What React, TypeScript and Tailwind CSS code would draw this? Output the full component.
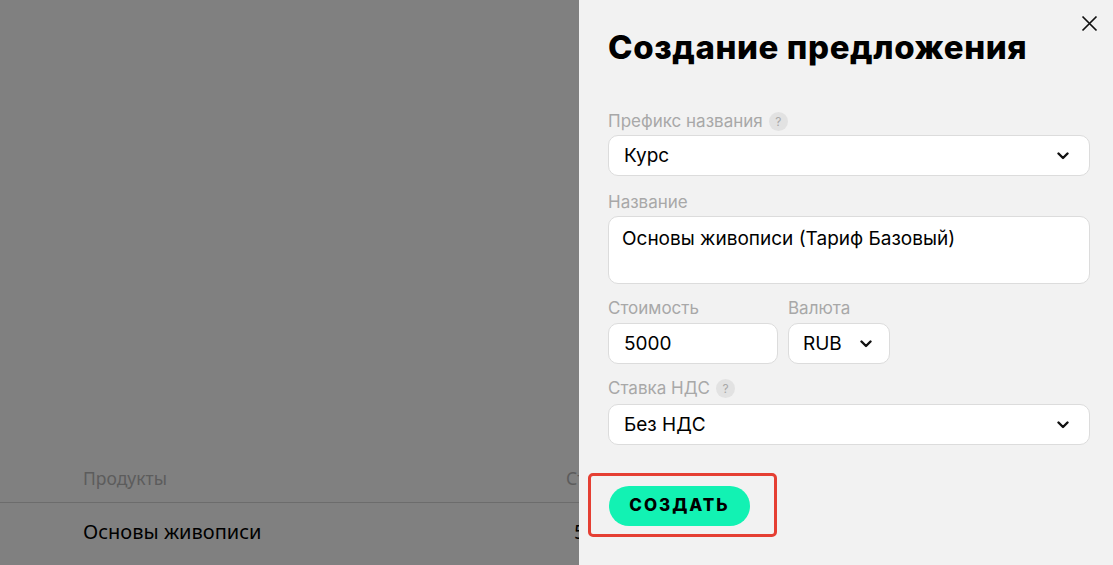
import React from "react";

const Chevron = ({ className = "" }: { className?: string }) => (
  <svg className={className} width="12" height="8" viewBox="0 0 12 8" fill="none">
    <path d="M1.5 1.5L6 6L10.5 1.5" stroke="#111" strokeWidth="2.4" strokeLinecap="round" strokeLinejoin="round" />
  </svg>
);

const Help = () => (
  <span className="ml-[6px] inline-flex h-[19px] w-[19px] items-center justify-center rounded-full bg-[#e2e2e2] text-[12px] leading-none text-[#a8a8a8]">?</span>
);

export default function App() {
  const font = { fontFamily: "Inter, 'Noto Sans', sans-serif" };
  return (
    <div className="flex h-[565px] w-[1113px] overflow-hidden">
      <div className="relative flex-1 overflow-hidden bg-[#808080]" style={{ fontFamily: "'Noto Sans', sans-serif" }}>
        <div className="mt-[464px] flex h-[38px] items-start pl-[83px] text-[17.5px] text-[#5c5c5c]">
          <div className="w-[483px] shrink-0 pt-[1px]">Продукты</div>
          <div className="shrink-0 whitespace-nowrap pt-[1px]">Стоимость</div>
        </div>
        <div className="h-px w-full bg-[#6c6c6c]" />
        <div className="flex h-[58px] items-center pl-[83px] text-[20px] text-black">
          <div className="w-[491px] shrink-0">Основы живописи</div>
          <div className="shrink-0 whitespace-nowrap">5000 ₽</div>
        </div>
      </div>
      <div className="relative w-[534px] shrink-0 bg-[#f2f2f2] pl-[29px] pr-[23px] pt-[27px]" style={font}>
        <button className="absolute right-[15px] top-[15px] h-[17px] w-[17px]">
          <svg width="17" height="17" viewBox="0 0 17 17" fill="none">
            <path d="M1.5 1.5L15.5 15.5M15.5 1.5L1.5 15.5" stroke="#111" strokeWidth="1.7" />
          </svg>
        </button>
        <h1 className="text-[33px] font-extrabold leading-[40px] tracking-[0.6px] text-black">Создание предложения</h1>

        <div className="mt-[44px] flex h-[20px] items-center pt-[1px] text-[17px] text-[#a8a8a8]">
          Префикс названия <Help />
        </div>
        <div className="mt-[4px] flex h-[41px] items-center justify-between rounded-[10px] border border-[#dcdcdc] bg-white pl-[15px] pr-[20px] pt-[1px] text-[19px] text-black">
          <span>Курс</span>
          <Chevron />
        </div>

        <div className="mt-[16px] flex h-[20px] items-center pt-[1px] text-[17px] text-[#a8a8a8]">Название</div>
        <div className="mt-[4px] h-[68px] rounded-[10px] border border-[#dcdcdc] bg-white pl-[13px] pt-[10px] text-[19px] leading-[24px] text-black">
          Основы живописи (Тариф Базовый)
        </div>

        <div className="mt-[14px] flex gap-[10px]">
          <div className="w-[170px]">
            <div className="flex h-[20px] items-center pt-[1px] text-[17px] text-[#a8a8a8]">Стоимость</div>
            <div className="mt-[5px] flex h-[41px] items-center rounded-[10px] border border-[#dcdcdc] bg-white pl-[15px] pt-[1px] text-[19px] text-black">5000</div>
          </div>
          <div className="w-[102px]">
            <div className="flex h-[20px] items-center pt-[1px] text-[17px] text-[#a8a8a8]">Валюта</div>
            <div className="mt-[5px] flex h-[41px] items-center justify-between rounded-[10px] border border-[#dcdcdc] bg-white pl-[14px] pr-[17px] pt-[1px] text-[19px] text-black">
              <span>RUB</span>
              <Chevron />
            </div>
          </div>
        </div>

        <div className="mt-[14px] flex h-[20px] items-center pt-[1px] text-[17px] text-[#a8a8a8]">
          Ставка НДС <Help />
        </div>
        <div className="mt-[6px] flex h-[41px] items-center justify-between rounded-[10px] border border-[#dcdcdc] bg-white pl-[15px] pr-[20px] pt-[1px] text-[19px] text-black">
          <span>Без НДС</span>
          <Chevron />
        </div>

        <div className="-ml-[20px] mt-[28px] inline-block rounded-[5px] border-[3px] border-[#e53f33] pb-[8px] pl-[18px] pr-[24px] pt-[10px]">
          <button className="flex h-[40px] w-[141px] items-center justify-center rounded-full bg-[#12f2b3] text-[17px] font-extrabold tracking-[2px] text-black">
            СОЗДАТЬ
          </button>
        </div>
      </div>
    </div>
  );
}
